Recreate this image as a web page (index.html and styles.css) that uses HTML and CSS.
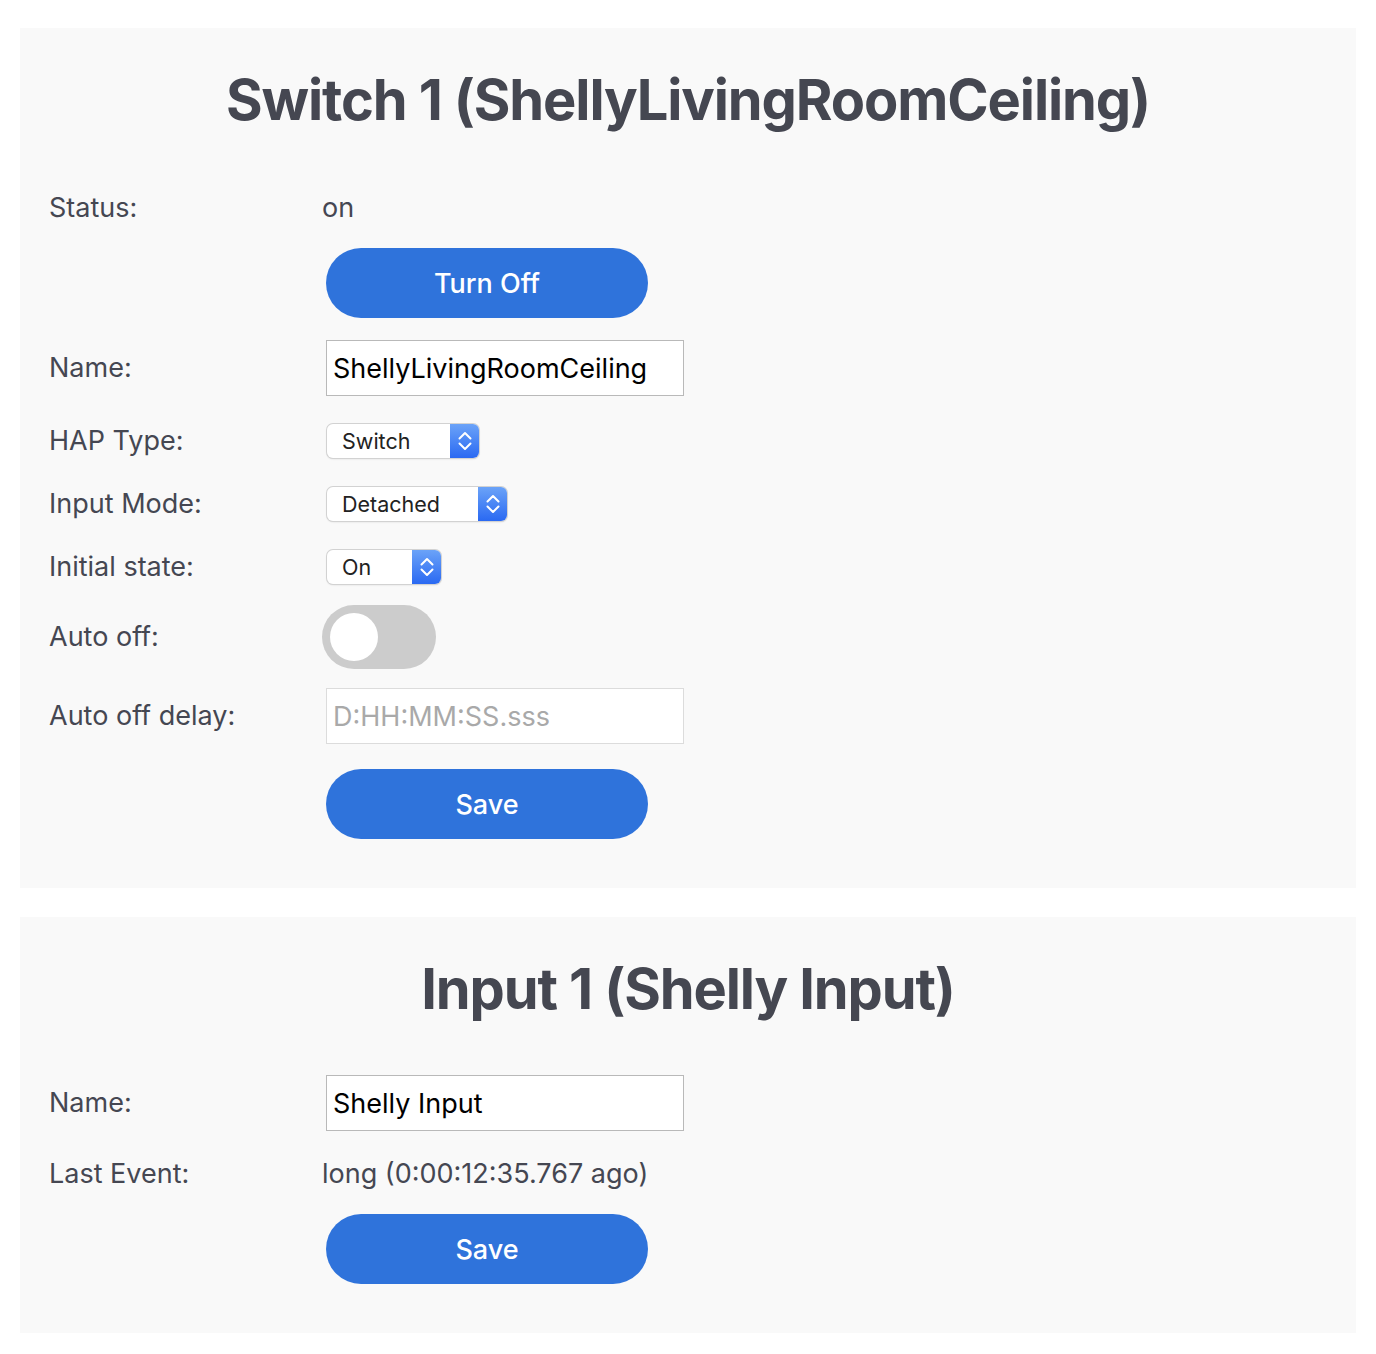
FILE: index.html
```html
<!DOCTYPE html>
<html lang="en">
<head>
    <meta charset="UTF-8">
    <meta name="viewport" content="width=device-width, initial-scale=1.0">
    <title>Shelly HomeKit</title>
    <link rel="stylesheet" href="styles.css">
</head>
<body>
    <section class="card">
        <h1>Switch 1 (ShellyLivingRoomCeiling)</h1>
        <div class="form">
            <div class="row row-status">
                <label>Status:</label>
                <span class="value">on</span>
            </div>
            <div class="row row-btn-first">
                <label></label>
                <button class="btn">Turn Off</button>
            </div>
            <div class="row row-input">
                <label>Name:</label>
                <input type="text" class="text-input" value="ShellyLivingRoomCeiling">
            </div>
            <div class="row row-select-first">
                <label>HAP Type:</label>
                <div class="select sel-type">
                    <select>
                        <option>Switch</option>
                        <option>Outlet</option>
                        <option>Lock</option>
                    </select>
                    <span class="select-arrow">
                        <svg width="14" height="22" viewBox="0 0 14 22"><path d="M1.5 8.5 7 3 12.5 8.5M1.5 13.5 7 19 12.5 13.5" fill="none" stroke="#fff" stroke-width="2" stroke-linecap="round" stroke-linejoin="round"/></svg>
                    </span>
                </div>
            </div>
            <div class="row row-select">
                <label>Input Mode:</label>
                <div class="select sel-mode">
                    <select>
                        <option>Detached</option>
                        <option>Toggle</option>
                        <option>Edge</option>
                    </select>
                    <span class="select-arrow">
                        <svg width="14" height="22" viewBox="0 0 14 22"><path d="M1.5 8.5 7 3 12.5 8.5M1.5 13.5 7 19 12.5 13.5" fill="none" stroke="#fff" stroke-width="2" stroke-linecap="round" stroke-linejoin="round"/></svg>
                    </span>
                </div>
            </div>
            <div class="row row-select">
                <label>Initial state:</label>
                <div class="select sel-state">
                    <select>
                        <option>On</option>
                        <option>Off</option>
                        <option>Last</option>
                    </select>
                    <span class="select-arrow">
                        <svg width="14" height="22" viewBox="0 0 14 22"><path d="M1.5 8.5 7 3 12.5 8.5M1.5 13.5 7 19 12.5 13.5" fill="none" stroke="#fff" stroke-width="2" stroke-linecap="round" stroke-linejoin="round"/></svg>
                    </span>
                </div>
            </div>
            <div class="row row-toggle">
                <label>Auto off:</label>
                <label class="switch">
                    <input type="checkbox">
                    <span class="slider"></span>
                </label>
            </div>
            <div class="row row-delay">
                <label>Auto off delay:</label>
                <input type="text" class="text-input" placeholder="D:HH:MM:SS.sss" disabled>
            </div>
            <div class="row row-save">
                <label></label>
                <button class="btn">Save</button>
            </div>
        </div>
    </section>

    <section class="card">
        <h1>Input 1 (Shelly Input)</h1>
        <div class="form">
            <div class="row row-input-first">
                <label>Name:</label>
                <input type="text" class="text-input" value="Shelly Input">
            </div>
            <div class="row row-event">
                <label>Last Event:</label>
                <span class="value">long (0:00:12:35.767 ago)</span>
            </div>
            <div class="row row-save-input">
                <label></label>
                <button class="btn">Save</button>
            </div>
        </div>
    </section>
</body>
</html>
```

FILE: styles.css
```css
* { margin: 0; padding: 0; box-sizing: border-box; }
body {
    font-family: Inter, "Noto Sans", sans-serif;
    background: #fff;
    color: #454752;
    padding: 28px 20px;
}
.card {
    background: #f9f9f9;
    padding: 39px 29px 49px;
    margin-bottom: 29px;
}
.card h1 {
    font-size: 56px;
    line-height: 67px;
    font-weight: 700;
    text-align: center;
    letter-spacing: -0.02em;
    color: #454751;
}
.row {
    display: flex;
    align-items: center;
}
.row > label:first-child {
    width: 273px;
    flex-shrink: 0;
    font-size: 27px;
    line-height: 32px;
}
.value {
    font-size: 27px;
    line-height: 32px;
}
.row-status { margin-top: 58px; }
.row-btn-first { margin-top: 24px; }
.row-input { margin-top: 22px; }
.row-select-first { margin-top: 28px; }
.row-select { margin-top: 29px; }
.row-toggle { margin-top: 21px; }
.row-delay { margin-top: 19px; }
.row-save { margin-top: 25px; }
.row-input-first { margin-top: 52px; }
.row-event { margin-top: 27px; }
.row-save-input { margin-top: 24px; }

.btn {
    margin-left: 4px;
    width: 322px;
    height: 70px;
    border: none;
    border-radius: 35px;
    background: #2f73db;
    color: #fff;
    font-family: inherit;
    font-size: 27px;
    font-weight: 500;
    cursor: pointer;
}
.text-input {
    margin-left: 4px;
    width: 358px;
    height: 56px;
    border: 1px solid #b9b9b9;
    background: #fff;
    padding: 0 6px;
    font-family: inherit;
    font-size: 27px;
    color: #000;
    outline: none;
}
.text-input::placeholder {
    color: #a9a9a9;
}
.text-input:disabled {
    border-color: #dcdcdc;
}

/* native-looking select with blue stepper segment */
.select {
    margin-left: 5px;
    display: flex;
    height: 34px;
    border-radius: 6px;
    background: #fff;
    box-shadow: 0 0 0 1px #d2d2d2, 0 1px 2px rgba(0, 0, 0, 0.15);
    overflow: hidden;
}
.select select {
    flex: 1;
    appearance: none;
    -webkit-appearance: none;
    border: none;
    background: transparent;
    padding-left: 15px;
    font-family: inherit;
    font-size: 21.5px;
    color: #222;
    outline: none;
}
.select-arrow {
    width: 29px;
    display: flex;
    align-items: center;
    justify-content: center;
    background: linear-gradient(#6ba3f8, #2a69f2);
}
.sel-type { width: 152px; }
.sel-mode { width: 180px; }
.sel-state { width: 114px; }

/* toggle switch */
.switch {
    position: relative;
    display: inline-block;
    width: 114px;
    height: 64px;
}
.switch input {
    opacity: 0;
    width: 0;
    height: 0;
}
.slider {
    position: absolute;
    inset: 0;
    background: #cccccc;
    border-radius: 32px;
    cursor: pointer;
    transition: 0.3s;
}
.slider::before {
    content: '';
    position: absolute;
    left: 8px;
    top: 8px;
    width: 48px;
    height: 48px;
    border-radius: 50%;
    background: #fff;
    transition: 0.3s;
}
.switch input:checked + .slider {
    background: #2f73db;
}
.switch input:checked + .slider::before {
    transform: translateX(50px);
}
```
